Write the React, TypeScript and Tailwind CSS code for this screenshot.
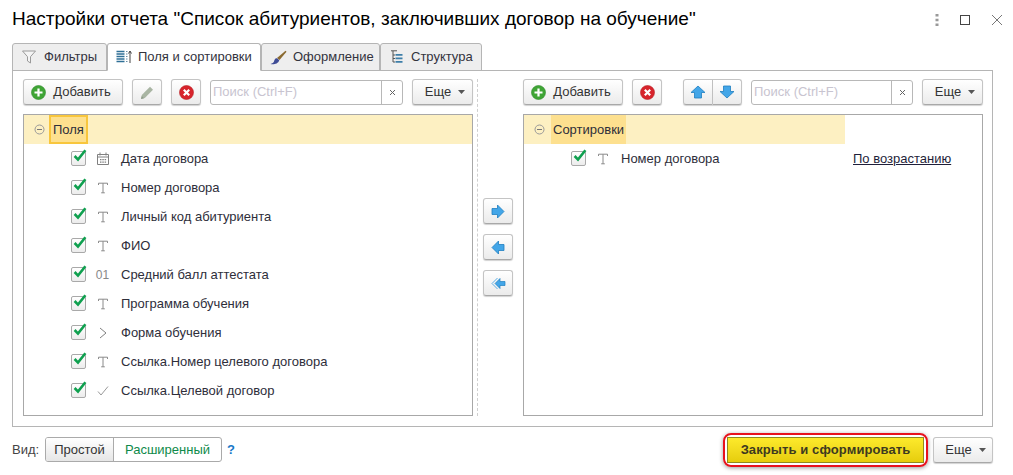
import React from "react";

const Btn = ({ className = "", children }: { className?: string; children?: React.ReactNode }) => (
  <div className={"flex items-center justify-center h-[26px] rounded-[3px] border border-[#c4c4c4] border-b-[#a8a8a8] bg-gradient-to-b from-white to-[#ebebeb] shadow-[0_1px_1px_rgba(0,0,0,0.18)] text-[#333] shrink-0 " + className}>
    {children}
  </div>
);

const AddIcon = () => (
  <svg width="15" height="15" viewBox="0 0 15 15"><circle cx="7.500" cy="7.500" r="7" fill="#3fa535" stroke="#2d8a2a" strokeWidth="0.6" /><path d="M7.500 3.500v8M3.500 7.500h8" stroke="#fff" strokeWidth="2.200" /></svg>
);
const DelIcon = () => (
  <svg width="15" height="15" viewBox="0 0 15 15"><circle cx="7.500" cy="7.500" r="7" fill="#d7242c" stroke="#b81e24" strokeWidth="0.6" /><path d="M4.800 4.800l5.400 5.400M10.200 4.800l-5.400 5.400" stroke="#fff" strokeWidth="2.200" /></svg>
);
const Pencil = () => (
  <svg width="14" height="15" viewBox="0 0 14 15"><path d="M1 14l.8-4L10 1.800l3 3L4.800 13z" fill="#a9b5a3" /><path d="M1 14l.8-3 2.200 2.200z" fill="#8f9a8a" /></svg>
);
const Caret = () => (
  <svg width="7" height="4" viewBox="0 0 7 4" className="ml-[7px]"><path d="M0 0h7L3.500 4z" fill="#555" /></svg>
);
const ArrowUp = () => (
  <svg width="16" height="14" viewBox="0 0 16 14"><path d="M8 1L15 7.500h-3.500V13h-7V7.500H1z" fill="#43a6e8" stroke="#1f7fc0" strokeWidth="0.8" strokeLinejoin="round" /></svg>
);
const ArrowDown = () => (
  <svg width="16" height="14" viewBox="0 0 16 14"><path d="M8 13L15 6.500h-3.500V1h-7v5.500H1z" fill="#43a6e8" stroke="#1f7fc0" strokeWidth="0.8" strokeLinejoin="round" /></svg>
);
const ArrowRight = () => (
  <svg width="14" height="15" viewBox="0 0 14 15"><path d="M13 7.500L6.500 1v3.500H1v6h5.500V14z" fill="#43a6e8" stroke="#1f7fc0" strokeWidth="0.8" strokeLinejoin="round" /></svg>
);
const ArrowLeft = () => (
  <svg width="14" height="15" viewBox="0 0 14 15"><path d="M1 7.500L7.500 1v3.500H13v6H7.500V14z" fill="#43a6e8" stroke="#1f7fc0" strokeWidth="0.8" strokeLinejoin="round" /></svg>
);
const ArrowLeftAll = () => (
  <svg width="15" height="13" viewBox="0 0 15 13"><path d="M6.500 1L1 6.500 6.500 12" fill="none" stroke="#5aaee6" strokeWidth="1" /><path d="M4 6.500L9 1.500v3h5v4H9v3z" fill="#43a6e8" stroke="#1f7fc0" strokeWidth="0.7" strokeLinejoin="round" /></svg>
);

const Search = () => (
  <div className="flex h-[25px] flex-1 min-w-0 rounded-[3px] border border-[#b8b8b8] bg-white items-stretch">
    <div className="flex-1 pl-[2px] flex items-center text-[#c8c4d0]">Поиск (Ctrl+F)</div>
    <div className="w-[21px] border-l border-[#b8b8b8] flex items-center justify-center">
      <svg width="7" height="7" viewBox="0 0 7 7"><path d="M1 1l5 5M6 1L1 6" stroke="#666" strokeWidth="1" /></svg>
    </div>
  </div>
);

const Check = () => (
  <div className="relative w-[15px] h-[15px] rounded-[2px] border border-[#a9a9a9] bg-gradient-to-b from-white to-[#ececec] shrink-0">
    <svg width="17" height="15" viewBox="0 0 17 15" className="absolute left-0 top-[-4px]"><path d="M2.600 8l3.400 3.600L13.400 2.200" fill="none" stroke="#0fa04f" strokeWidth="2.600" /></svg>
  </div>
);

const TypeT = () => (
  <svg width="12" height="12" viewBox="0 0 12 12"><path d="M1.500 3V1.200h9V3M6 1.200v9.600M4.200 10.800h3.600" fill="none" stroke="#8a8a8a" strokeWidth="1" /></svg>
);
const TypeDate = () => (
  <svg width="12" height="13" viewBox="0 0 12 13"><path d="M.5 2.500h11v10H.5zM3 .5v3M9 .5v3M.5 5h11" fill="none" stroke="#808080" strokeWidth="1" /><path d="M3 7h1.500v1.300H3zM5.300 7h1.500v1.300H5.300zM7.600 7h1.500v1.300H7.600zM3 9.500h1.500v1.300H3zM5.300 9.500h1.500v1.300H5.300zM7.600 9.500h1.500v1.300H7.600z" fill="#808080" /></svg>
);
const TypeNum = () => <span className="text-[#888] text-[12px] leading-none">01</span>;
const TypeRef = () => (
  <svg width="8" height="12" viewBox="0 0 8 12"><path d="M1 1l6 5-6 5" fill="none" stroke="#808080" strokeWidth="1" /></svg>
);
const TypeBool = () => (
  <svg width="12" height="10" viewBox="0 0 12 10"><path d="M1 5.500l3 3.500L11 .5" fill="none" stroke="#999" strokeWidth="1" /></svg>
);

const fields: [string, React.ReactNode][] = [
  ["Дата договора", <TypeDate />],
  ["Номер договора", <TypeT />],
  ["Личный код абитуриента", <TypeT />],
  ["ФИО", <TypeT />],
  ["Средний балл аттестата", <TypeNum />],
  ["Программа обучения", <TypeT />],
  ["Форма обучения", <TypeRef />],
  ["Ссылка.Номер целевого договора", <TypeT />],
  ["Ссылка.Целевой договор", <TypeBool />],
];

const Row = ({ label, icon }: { label: string; icon: React.ReactNode }) => (
  <div className="h-[29px] flex items-center pl-[47px] text-[#2e2e3a]">
    <Check />
    <div className="w-[35px] pr-[2px] flex items-center justify-center">{icon}</div>
    <span>{label}</span>
  </div>
);

const Minus = () => (
  <svg width="11" height="11" viewBox="0 0 11 11"><circle cx="5.500" cy="5.500" r="4.500" fill="none" stroke="#999" /><path d="M3 5.500h5" stroke="#777" /></svg>
);

const Tab = ({ label, icon, active, w }: { label: string; icon: React.ReactNode; active?: boolean; w: string }) => (
  <div className={"h-[28px] -mb-px border border-[#b5b5b5] rounded-t-[3px] flex items-center text-[#33333d] " + w + (active ? " bg-white border-b-white z-10" : " bg-[#eeeeee]")}>
    {icon}
    <span>{label}</span>
  </div>
);

export default function App() {
  return (
    <div className="w-[1013px] h-[475px] bg-white flex flex-col overflow-hidden text-[13px] text-[#333]" style={{ fontFamily: '"Liberation Sans", Arial, sans-serif' }}>
      <div className="h-[43px] shrink-0 flex items-center pl-3 pr-[10px]">
        <div className="flex-1 text-[19px] text-black pb-[4px]">Настройки отчета "Список абитуриентов, заключивших договор на обучение"</div>
        <div className="flex items-center pb-[4px]">
          <svg width="4" height="12" viewBox="0 0 4 12"><path d="M0.500 0h3v2.500h-3zM0.500 4.700h3v2.500h-3zM0.500 9.400h3v2.500h-3z" fill="#999" /></svg>
          <svg width="10" height="10" viewBox="0 0 10 10" className="ml-[21px]"><rect x=".5" y=".5" width="9" height="9" fill="none" stroke="#444" /></svg>
          <svg width="12" height="12" viewBox="0 0 12 12" className="ml-[21px]"><path d="M1 1l10 10M11 1L1 11" stroke="#777" strokeWidth="1" /></svg>
        </div>
      </div>

      <div className="flex pl-3 shrink-0 h-[27px] items-start">
        <Tab w="w-[95px] pl-[9px]" label="Фильтры" icon={<svg width="14" height="14" viewBox="0 0 14 14" className="mr-[8px]"><path d="M.5 1h13L8.500 6.700V13L5.500 11V6.700z" fill="#f4f4f4" stroke="#9a9a9a" /></svg>} />
        <Tab w="w-[154px] pl-[8px]" active label="Поля и сортировки" icon={<svg width="16" height="14" viewBox="0 0 16 14" className="mr-[6px]"><path d="M.5 1.500h8M.5 4h8M.5 6.500h8M.5 9h8M.5 11.500h8" stroke="#2f6f96" strokeWidth="1.300" /><path d="M10 1.500h1.500M10 4h1.500M10 6.500h1.500M10 9h1.500M10 11.500h1.500" stroke="#6a8fa8" strokeWidth="1" /><path d="M14 13V1.500M12.500 3.500L14 1l1.500 2.500" fill="none" stroke="#444" strokeWidth="1" /></svg>} />
        <Tab w="w-[119px] pl-[8px]" label="Оформление" icon={<svg width="17" height="15" viewBox="0 0 17 15" className="mr-[6px]"><path d="M7 8L15.500 .8 16.500 1.800 9.500 10z" fill="#8a6a30" /><path d="M7 8.200c-2.500 0-2.500 2-3 3.200-.4 1-1.700 2-3.500 2.600 3 .6 7.500.2 8.800-3.800z" fill="#3f4c96" /></svg>} />
        <Tab w="w-[102px] pl-[9px]" label="Структура" icon={<svg width="13" height="14" viewBox="0 0 13 14" className="mr-[8px]"><path d="M1 .8h6M3 1v11h2M3 5h2M3 8.500h2" fill="none" stroke="#555" /><path d="M5.500 4h7v1.700h-7zM5.500 7.500h7v1.700h-7zM5.500 11h7v1.700h-7z" fill="#3d7ea8" /></svg>} />
      </div>

      <div className="mx-3 w-[981px] h-[357px] shrink-0 border border-[#b5b5b5] flex pt-2 pb-[10px] pl-[10px] pr-[9px]">
        <div className="w-[450px] flex flex-col shrink-0">
          <div className="flex items-center h-[26px] mb-[9px]">
            <Btn className="w-[100px] pr-[4px]"><AddIcon /><span className="ml-[7px]">Добавить</span></Btn>
            <Btn className="w-[30px] ml-[9px]"><Pencil /></Btn>
            <Btn className="w-[30px] ml-[9px]"><DelIcon /></Btn>
            <div className="flex-1 ml-[9px] mr-[9px] flex"><Search /></div>
            <Btn className="w-[61px] pl-[5px]">Еще<Caret /></Btn>
          </div>
          <div className="flex-1 border border-[#a8a8a8] bg-white">
            <div className="h-[29px] bg-[#fdf0c2] flex items-center pl-[10px]">
              <Minus />
              <div className="ml-[4px] h-[29px] px-[2px] flex items-center border-2 border-[#f8c63d] bg-[#fde08f] text-[#2e2e3a]">Поля</div>
            </div>
            {fields.map(([l, i]) => <Row key={l} label={l} icon={i} />)}
          </div>
        </div>

        <div className="w-[50px] shrink-0 relative flex flex-col items-center pt-[119px]">
          <div className="absolute left-[4px] top-0 bottom-0 border-l border-dashed border-[#cfcfcf]" />
          <div className="flex flex-col gap-[10px]">
            <Btn className="w-[30px]"><ArrowRight /></Btn>
            <Btn className="w-[30px]"><ArrowLeft /></Btn>
            <Btn className="w-[30px]"><ArrowLeftAll /></Btn>
          </div>
        </div>

        <div className="w-[460px] flex flex-col shrink-0">
          <div className="flex items-center h-[26px] mb-[9px]">
            <Btn className="w-[100px] pr-[4px]"><AddIcon /><span className="ml-[7px]">Добавить</span></Btn>
            <Btn className="w-[30px] ml-[9px]"><DelIcon /></Btn>
            <div className="ml-[21px] flex h-[26px] w-[59px] shrink-0">
              <Btn className="w-[30px] rounded-r-none"><ArrowUp /></Btn>
              <Btn className="w-[29px] rounded-l-none border-l-0"><ArrowDown /></Btn>
            </div>
            <div className="flex-1 ml-[9px] mr-[9px] flex"><Search /></div>
            <Btn className="w-[61px] pl-[5px]">Еще<Caret /></Btn>
          </div>
          <div className="flex-1 border border-[#a8a8a8] bg-white">
            <div className="h-[29px] w-[321px] bg-[#fdf0c2] flex items-center pl-[10px]">
              <Minus />
              <div className="ml-[6px] h-[29px] px-[2px] flex items-center bg-[#fde08f] text-[#2e2e3a]">Сортировки</div>
            </div>
            <div className="h-[29px] flex items-center pl-[47px] text-[#2e2e3a]">
              <Check />
              <div className="w-[35px] pr-[2px] flex items-center justify-center"><TypeT /></div>
              <span className="w-[232px]">Номер договора</span>
              <span className="underline text-[#1f1f3a]">По возрастанию</span>
            </div>
          </div>
        </div>
      </div>

      <div className="flex items-center flex-1 pl-3 pr-5 pb-[3px]">
        <span className="text-[#444] w-[33px]">Вид:</span>
        <div className="flex h-[25px] w-[177px] rounded-[3px] border border-[#aaa] overflow-hidden">
          <div className="w-[68px] border-r border-[#aaa] bg-gradient-to-b from-white to-[#e6e6e6] flex items-center justify-center text-[#333]">Простой</div>
          <div className="flex-1 flex items-center justify-center text-[#0e8a4a]">Расширенный</div>
        </div>
        <span className="ml-[5px] font-bold text-[#1878c8] text-[13px]">?</span>
        <div className="flex-1" />
        <div className="p-[2px] rounded-[8px] border-2 border-[#e8121d] shadow-[0_1px_4px_rgba(0,0,0,0.4)]">
          <div className="w-[197px] h-[26px] border border-[#8f8a1e] bg-gradient-to-b from-[#fdea2b] to-[#e6cd0b] flex items-center justify-center font-bold tracking-[0.1px] text-[#3d3a20]">Закрыть и сформировать</div>
        </div>
        <Btn className="w-[60px] ml-[5px] mr-0 pl-[5px]">Еще<Caret /></Btn>
      </div>
    </div>
  );
}
